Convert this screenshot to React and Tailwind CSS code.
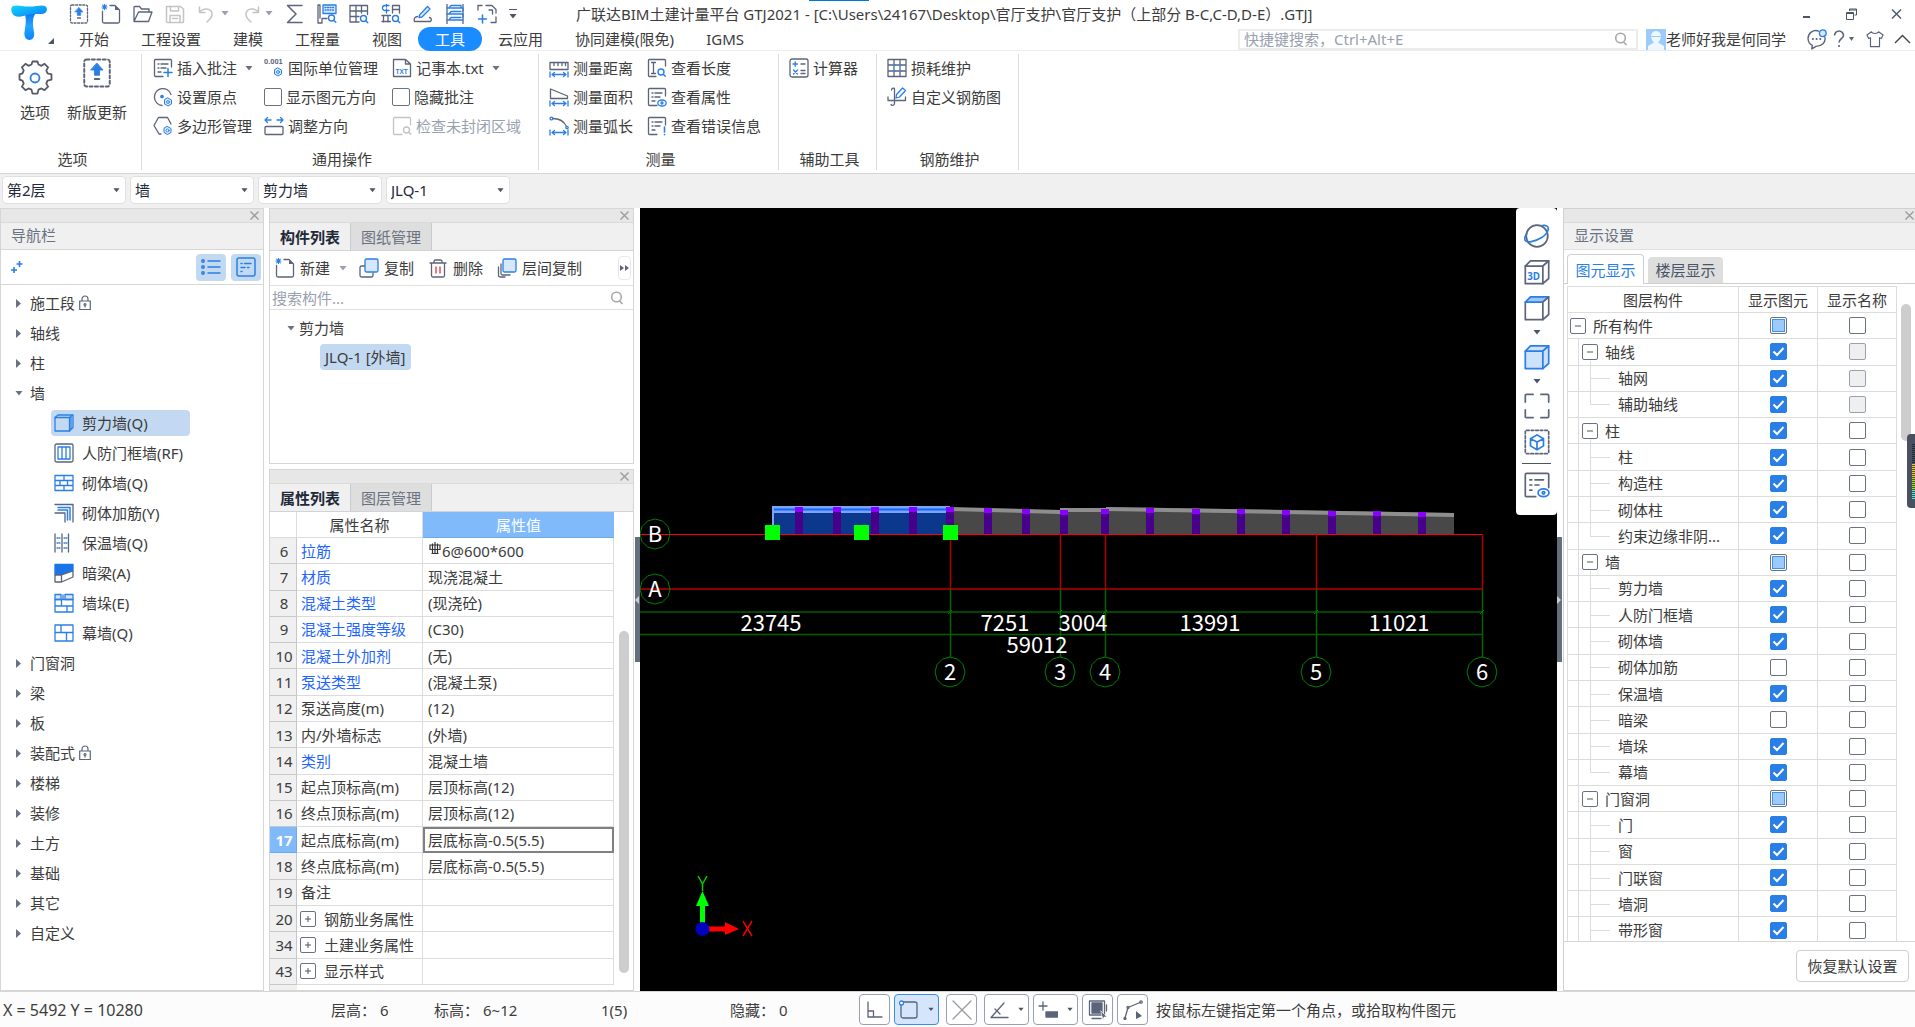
import clsx from "clsx"

const G = "#5b6478"
const B = "#2a7fe6"

const Icon = ({ size = 20, children, className }) => (
  <svg
    width={size}
    height={size}
    viewBox="0 0 20 20"
    fill="none"
    stroke={G}
    strokeWidth="1.3"
    strokeLinecap="round"
    strokeLinejoin="round"
    className={clsx("shrink-0", className)}
    aria-hidden="true"
  >
    {children}
  </svg>
)

const Caret = ({ className = "fill-gray-500" }) => (
  <svg width="8" height="5" viewBox="0 0 8 5" className={clsx("shrink-0", className)} aria-hidden="true">
    <path d="M0.5 0h7L4 4.5z" />
  </svg>
)

const SmallGear = ({ x, y }) => (
  <g stroke={B} strokeWidth="1">
    <path d={`M${x} ${y - 4}l3.5 2v4l-3.5 2l-3.5 -2v-4z`} fill="#d8e8fc" />
    <circle cx={x} cy={y} r="1.4" fill="#fff" />
  </g>
)

const Lens = ({ x, y, color = B }) => (
  <g stroke={color} strokeWidth="1.4">
    <circle cx={x} cy={y} r="3" />
    <path d={`M${x + 2.3} ${y + 2.3}l2 2`} />
  </g>
)

/* quick access bar */
const IconUpdate = ({ size }) => (
  <Icon size={size}>
    <rect x="1.5" y="1" width="17" height="18" rx="1.5" strokeDasharray="2 1.6" />
    <path d="M10 3.5l4 4.5h-2.3v3.5h-3.4V8H6z" fill={B} stroke={B} strokeWidth="0.6" />
    <path d="M8.5 14h3" stroke={G} />
  </Icon>
)
const IconNew = () => (
  <Icon>
    <path d="M1.5 7.5v10a1.5 1.5 0 001.5 1.5h14a1.5 1.5 0 001.5-1.5V6L14 1.5H9" />
    <path d="M14 1.5V6h4.5z" fill={G} stroke="none" />
    <path d="M3.5 0.5v5M1 3h5M1.7 1.2l3.6 3.6M5.3 1.2L1.7 4.8" stroke={B} strokeWidth="1.1" />
  </Icon>
)
const IconOpen = () => (
  <Icon>
    <path d="M1 17.5V3.5a1 1 0 011-1h4.5l2 2.5H16v3M1 17.5h14.5L19 8H5.5z" />
  </Icon>
)
const IconSave = () => (
  <Icon>
    <g stroke="#c4c4c4" strokeWidth="1.5">
      <path d="M1.5 2.5h14L18.5 5v12.5a1 1 0 01-1 1h-15a1 1 0 01-1-1z" />
      <path d="M5.5 2.5V7h8V2.5M5 18v-6.5h10V18M7.5 14.5h5" />
    </g>
  </Icon>
)
const IconUndo = ({ flip }) => (
  <Icon className={flip ? "-scale-x-100" : ""}>
    <path d="M2.5 3v5.5H8M2.5 8.5C6 3.5 14 4 15 9.5c.4 3-1.5 5.5-5 8.5" stroke="#c4c4c4" strokeWidth="1.5" />
  </Icon>
)
const IconSum = () => (
  <Icon>
    <path d="M17 1.5H2.5L11 10l-8.5 8.5H17" strokeWidth="1.5" />
  </Icon>
)
const IconSumView = () => (
  <Icon>
    <path d="M1 1v18h4v-4.5h5M1 1h2v13" />
    <path d="M6 1h13v8.5H6z" stroke={B} fill="#d8e8fc" />
    <path d="M8 3.5h9M8 6h9" stroke={B} strokeDasharray="1 1.5" />
    <Lens x={14.5} y={14} />
  </Icon>
)
const IconGridView = () => (
  <Icon>
    <path d="M1 1.5h17.5v9M1 1.5V18h9M1 7h17.5M1 12.5h9M7 1.5V18M12.5 1.5V9" />
    <Lens x={14.5} y={14.5} />
  </Icon>
)
const IconRebarView = () => (
  <Icon>
    <path d="M8 1.5H4a2.5 2.5 0 000 5h4M5.5 0v3M5.5 5v4" stroke={B} />
    <path d="M11.5 1.5h7V9M11.5 1.5V9M11.5 5.5h7M1 11.5h8.5M2.5 11.5V18M7 11.5V18M1 17.5h8.5" />
    <Lens x={14.5} y={14.5} />
  </Icon>
)
const IconPenArc = () => (
  <Icon>
    <path d="M6.5 11l8-8.5L17 5l-8 8-3 .5z" stroke={B} fill="#d8e8fc" />
    <path d="M1.5 17.5h16M4.5 12.500c-3 .5-4 2.5-3 5M17.5 17.5c1.5-1.5 1-3.500-1-4" />
  </Icon>
)
const IconFloors = () => (
  <Icon>
    <path d="M2 0.5v19M18 0.5v19" />
    <path d="M4 4l2-2.5h10V4M2 4h16v3M4 10l2-2.5h10M2 10h16v3M2 16h16M4 16l2-2.5h10" stroke={B} />
  </Icon>
)
const IconFrameAdd = () => (
  <Icon>
    <path d="M1 6V1.5h4M9 1.5h6L19 5.5V9M19 13v5.5h-5M12 6h3.5v4" />
    <path d="M5.5 11v8M1.5 15h8" stroke={B} strokeWidth="1.5" />
  </Icon>
)

/* ribbon icons */
const IconGear = () => (
  <svg width="36" height="36" viewBox="0 0 36 36" fill="none" strokeWidth="1.8" strokeLinejoin="round" aria-hidden="true">
    <path
      d="M14.5 4.5l1-3h5l1 3 3 1.3 3-2 3.6 3.6-1.8 3 1.2 2.9 4 1v5.400l-4 1-1.2 2.9 1.8 3-3.6 3.6-3-1.8-3 1.2-1 4h-5l-1-4-3-1.2-3 1.8-3.600-3.600 1.8-3-1.2-2.9-3-1v-5.400l3-1 1.2-2.9-1.8-3 3.6-3.6 3 2z"
      stroke="#555b66"
    />
    <circle cx="18" cy="18" r="4.5" stroke={B} />
  </svg>
)
const IconNote = ({ extra, dim }) => (
  <Icon>
    <path d="M18.5 9V2.5a1 1 0 00-1-1h-15a1 1 0 00-1 1v15a1 1 0 001 1H10" stroke={dim ? "#c4c4c4" : G} />
    {!dim && <path d="M5 6h1M8 6h7M5 10h1M8 10h5M5 14h3" />}
    {extra}
  </Icon>
)
const IconUnits = () => (
  <Icon>
    <text x="0" y="6" fontSize="7.5" fontWeight="700" fill={G} stroke="none" className="font-['Liberation_Sans']">0.001</text>
    <SmallGear x={14} y={14} />
  </Icon>
)
const IconTxt = () => (
  <Icon>
    <path d="M1.5 1.5h12l5 4.5v12.5h-17zM13.5 1.5V6h5" />
    <text x="3.5" y="15.5" fontSize="6.5" fontWeight="700" fill={B} stroke="none" className="font-['Liberation_Sans']">TXT</text>
  </Icon>
)
const IconOrigin = () => (
  <Icon>
    <path d="M18 7.5A8.5 8.5 0 109 18.5" />
    <circle cx="9" cy="9.5" r="1.2" fill={B} stroke={B} />
    <SmallGear x={15} y={15} />
  </Icon>
)
const IconPolygon = () => (
  <Icon>
    <path d="M8 18H6L1 9.5l4.5-8h9L18 8" />
    <SmallGear x={14.5} y={14.5} />
  </Icon>
)
const IconDirection = () => (
  <Icon>
    <path d="M2 10.5h16a1 1 0 011 1v6a1 1 0 01-1 1H2a1 1 0 01-1-1v-6a1 1 0 011-1z" />
    <path d="M7 4H1.5M3.5 1.5L1 4l2.5 2.5M13 4h5.5M16.5 1.5L19 4l-2.5 2.5" stroke={B} />
  </Icon>
)
const MeasureArrow = () => (
  <path d="M1 14v5M19 14v5M3 16.5h14M5.5 14.5l-2.5 2 2.5 2M14.5 14.5l2.5 2-2.5 2" stroke={B} />
)
const IconDistance = () => (
  <Icon>
    <path d="M1 4.5h18v7H1zM5 4.5v3M9 4.5v3M13 4.5v3M16.5 4.5v3" />
    <MeasureArrow />
  </Icon>
)
const IconArea = () => (
  <Icon>
    <path d="M1.5 2v9.5h17V9z" />
    <MeasureArrow />
  </Icon>
)
const IconArc = () => (
  <Icon>
    <path d="M3.5 2.5c7 0 12 3.500 14 8" />
    <circle cx="2.5" cy="2.5" r="1.4" stroke={B} />
    <circle cx="18" cy="11.5" r="1.2" stroke={B} />
    <MeasureArrow />
  </Icon>
)
const IconLength = () => (
  <Icon>
    <path d="M18.5 8V2.5a1 1 0 00-1-1h-15a1 1 0 00-1 1v15a1 1 0 001 1H9M4.5 4.5h4M4.5 15.5h4M6.5 4.5v11" />
    <Lens x={14} y={14} />
  </Icon>
)
const Eye = () => (
  <g stroke={B}>
    <ellipse cx="15" cy="16" rx="4.2" ry="3" fill="#fff" />
    <circle cx="15" cy="16" r="1" />
  </g>
)
const IconCalc = () => (
  <Icon>
    <rect x="1" y="1" width="18" height="18" rx="2" />
    <path d="M4 6h4.5M6.2 3.8v4.5M4.5 12l4 4M8.5 12l-4 4" stroke={B} />
    <path d="M12 6h4M12 12.5h4M12 15.5h4" />
  </Icon>
)
const IconLoss = () => (
  <Icon>
    <path d="M1 1.5h18v17H1zM1 7h18M1 13h18M7 1.5v17M13 1.5v17" />
    <g fill="#fff" stroke={B} strokeWidth="1">
      <circle cx="7" cy="7" r="0.8" />
      <circle cx="13" cy="7" r="0.8" />
      <circle cx="7" cy="13" r="0.8" />
      <circle cx="13" cy="13" r="0.8" />
    </g>
  </Icon>
)
const IconCustomBar = () => (
  <Icon>
    <path d="M7.5 1.5v15c0 2-3 2.500-3.500 1M1 13.5h17.5V10M7.5 1.5c-1.5-1-3 0-3 1.5M1 13.5V10" />
    <path d="M9.5 7.5l6-6.5 3 2.5-6 6.5-3.5 1z" stroke={B} fill="#fff" />
  </Icon>
)

/* navigator icons */
const IconCube = ({ fill = "#e8f1fd", top, stroke = B, size, label }) => (
  <Icon size={size}>
    <path d="M1 5.5h13.5V19H1z" fill={fill} stroke={stroke} />
    <path d="M1 5.5L5 1.5h14L14.5 5.5z" fill={top || fill} stroke={top ? B : stroke} />
    <path d="M19 1.5V15l-4.5 4V5.5z" fill={fill} stroke={stroke} />
    {label && <text x="2.5" y="16" fontSize="7.5" fontWeight="700" fill={B} stroke="none" className="font-['Open_Sans']">3D</text>}
  </Icon>
)
const IconWallShear = () => (
  <Icon>
    <path d="M1 4.5h14.5V18H1z" stroke={B} />
    <path d="M1 4.5L4 2h15v12.5L15.5 18M15.5 4.5L19 2M17 4v12.5" stroke={B} />
  </Icon>
)
const IconDoorFrame = () => (
  <Icon>
    <rect x="1" y="1" width="18" height="18" rx="1.5" />
    <path d="M4 4h12v12H4zM8 4v12M12 4v12" stroke={B} />
  </Icon>
)
const IconBrick = () => (
  <Icon>
    <path d="M1 2.5h18v15H1zM1 7.5h18M1 12.5h18M10 2.5v5M6 7.5v5M13.5 7.5v5M10 12.5v5" stroke={B} />
  </Icon>
)
const IconBrickBar = () => (
  <Icon>
    <path d="M1 1.5h18V19M1 10h10v9" />
    <path d="M4 4.5h12V17M4 7h9.5v10" stroke={B} strokeWidth="1.5" />
  </Icon>
)
const IconInsulate = () => (
  <Icon>
    <path d="M1 1v18M8 1v18M14.5 1v18" />
    <path d="M3 5h3M3 10h3M3 15h3M10 5h3M10 10h3M10 15h3" stroke={B} strokeDasharray="1 1.2" />
  </Icon>
)
const IconBeam = () => (
  <Icon>
    <path d="M1 1.5h18v6L8 12H1z" fill="#1a74e8" stroke="#1a74e8" />
    <path d="M1 12h6.5v7H1zM7.5 12L19 8v6L7.5 19" fill="#fff" />
  </Icon>
)
const IconPier = () => (
  <Icon>
    <path d="M1 1.5h6v5H1zM11 1.5h8v5h-8z" fill="#d8e8fc" stroke={B} />
    <path d="M1 6.5h18V19H1zM1 13h18M9 2v4.5M7.5 6.5V13M13 13v6" stroke={B} />
  </Icon>
)
const IconCurtain = () => (
  <Icon>
    <path d="M1 2h18v16H1zM1 9.5h18M7 2v7.5M12.5 9.5V18" stroke={B} />
  </Icon>
)
const IconLock = () => (
  <svg width="12" height="16" viewBox="0 0 12 16" fill="none" stroke={G} strokeWidth="1.2" aria-hidden="true">
    <path d="M0.7 6h10.600v8.500H0.700zM3 6V4a3 3 0 016 0v2" />
    <circle cx="6" cy="9.5" r="1" />
    <path d="M6 10.5v2" />
  </svg>
)
const IconSearch = () => (
  <svg width="14" height="14" viewBox="0 0 14 14" fill="none" stroke="#a8a8a8" strokeWidth="1.6" aria-hidden="true">
    <circle cx="6.5" cy="6" r="4.8" />
    <path d="M9.5 10l3 3" />
  </svg>
)
const IconCopy = ({ layered }) => (
  <Icon>
    <path d={layered ? "M4 6v9.5a1.5 1.5 0 001.5 1.5H13M1.500 9v8.500A1.500 1.500 0 003 19h5" : "M6 8H2.500A1.500 1.500 0 001 9.500v8A1.500 1.500 0 002.500 19h10a1.500 1.500 0 001.500-1.500V15"} />
    <rect x="6" y="1" width="13" height="13" rx="1.5" fill="#d8e8fc" stroke={B} />
  </Icon>
)
const IconTrash = () => (
  <Icon>
    <path d="M2 5h16M6 5V3.500A1.500 1.500 0 017.500 2h5A1.500 1.500 0 0114 3.500V5M3.500 5v12.500A1.500 1.500 0 005 19h10a1.500 1.500 0 001.500-1.500V5" />
    <path d="M8 9v6M12 9v6" stroke="#e0343b" />
  </Icon>
)

const MENU = ["开始", "工程设置", "建模", "工程量", "视图", "工具", "云应用", "协同建模(限免)", "IGMS"]

const Logo = () => (
  <svg width="38" height="38" viewBox="0 0 38 38" aria-hidden="true">
    <defs>
      <linearGradient id="logoTop" x1="0" y1="0" x2="1" y2="1">
        <stop offset="0" stopColor="#12d8fb" />
        <stop offset="1" stopColor="#0a78f5" />
      </linearGradient>
      <linearGradient id="logoStem" x1="0" y1="0" x2="0" y2="1">
        <stop offset="0" stopColor="#0d6ff2" />
        <stop offset="0.5" stopColor="#22a6fb" />
        <stop offset="1" stopColor="#0b84fa" />
      </linearGradient>
    </defs>
    <path d="M13 8c4 3 3 12 1.500 20-.8 5 2 8 5 8s5.500-3 4.500-8c-1.500-8-2-16 3-20z" fill="url(#logoStem)" />
    <path d="M3 2c5-1.500 8 .5 16 .5S31 .5 35 2c3 1.500 2.500 6.500-1 7.500-5 1.500-9-.5-15 1-6 1-9 3.500-14 1.500C1 10 0 3.500 3 2z" fill="url(#logoTop)" />
  </svg>
)

const QuickBar = () => (
  <div className="flex h-[26px] items-center gap-3">
    <button aria-label="更新"><IconUpdate /></button>
    <button aria-label="新建工程"><IconNew /></button>
    <button aria-label="打开"><IconOpen /></button>
    <button aria-label="保存"><IconSave /></button>
    <button aria-label="撤销" className="flex w-8 items-center justify-between"><IconUndo /><Caret className="fill-gray-400" /></button>
    <button aria-label="恢复" className="flex w-8 items-center justify-between"><IconUndo flip /><Caret className="fill-gray-400" /></button>
    <button aria-label="汇总计算"><IconSum /></button>
    <button aria-label="查看工程量"><IconSumView /></button>
    <button aria-label="查看报表"><IconGridView /></button>
    <button aria-label="查看钢筋"><IconRebarView /></button>
    <button aria-label="编辑钢筋"><IconPenArc /></button>
    <button aria-label="楼层"><IconFloors /></button>
    <button aria-label="框选"><IconFrameAdd /></button>
    <button aria-label="更多" className="flex flex-col items-center gap-1">
      <span className="h-px w-2 bg-gray-600" />
      <Caret className="fill-gray-600" />
    </button>
  </div>
)

const Header = () => (
  <header className="relative z-10 flex h-[51px] shrink-0 border-b border-[#ececec] bg-white">
    <div className="absolute left-[809px] top-0 h-px w-[60px] bg-[#0078d7]" />
    <div className="flex w-[63px] shrink-0 pl-[10px] pt-1">
      <Logo />
      <svg width="6" height="6" viewBox="0 0 6 6" className="mt-[34px] fill-gray-600" aria-hidden="true"><path d="M6 0v6H0z" /></svg>
    </div>
    <div className="flex min-w-0 flex-1 flex-col">
      <div className="flex h-[27px] shrink-0 items-center">
        <div className="w-[513px] shrink-0 pl-[6px]"><QuickBar /></div>
        <h1 className="flex-1 whitespace-nowrap">
          广联达BIM土建计量平台 GTJ2021 - [C:\Users\24167\Desktop\官厅支护\官厅支护（上部分 B-C,C-D,D-E）.GTJ]
        </h1>
        <div className="flex gap-[34px] pr-[13px] text-gray-600">
          <button aria-label="最小化"><svg width="10" height="12" viewBox="0 0 10 12" fill="currentColor"><path d="M1 8h7v2H1z" /></svg></button>
          <button aria-label="还原">
            <svg width="11" height="12" viewBox="0 0 11 12" fill="none" stroke="currentColor"><path d="M3.5 3V1h7v6h-2M3.5 2h7M0.5 4.5h7v7h-7zM0.5 5.5h7" /></svg>
          </button>
          <button aria-label="关闭"><svg width="11" height="12" viewBox="0 0 11 12" stroke="currentColor" strokeWidth="1.4"><path d="M1 1.5l9 9M10 1.5l-9 9" /></svg></button>
        </div>
      </div>
      <div className="flex h-6 shrink-0 items-center">
        <nav className="flex flex-1">
          {MENU.map((m) => (
            <button
              key={m}
              className={clsx("h-6 whitespace-nowrap rounded-full", m === "工具" ? "bg-[#1a8cff] px-[17px] text-white" : "px-4")}
            >
              {m}
            </button>
          ))}
        </nav>
        <label className="flex h-[21px] w-[400px] items-center border-2 border-[#ececec] px-1">
          <input className="min-w-0 flex-1 outline-none placeholder:text-gray-400" placeholder="快捷键搜索，Ctrl+Alt+E" aria-label="快捷键搜索" />
          <span className="mr-1"><IconSearch /></span>
        </label>
        <button className="ml-2 flex items-center">
          <svg width="20" height="21" viewBox="0 0 20 21" aria-hidden="true">
            <path d="M0 0h20v21H0z" fill="#9ccbfb" />
            <path d="M5 7a5 5 0 0110 0c0 3-1.500 5-3 6.500l6 3.500v4H2v-4l6-3.500C6.500 12 5 10 5 7z" fill="#eef6ff" />
            <path d="M4 7.5h12" stroke="#9ccbfb" />
          </svg>
          <span className="whitespace-nowrap">老师好我是何同学</span>
        </button>
        <button aria-label="消息" className="ml-5">
          <Icon size={21}>
            <path d="M12 2C7 0 1.500 4 2 9.500c.2 3 1.500 5 4 6L5.500 19l4-2.500C15 16.500 19 13 18 8" />
            <path d="M6.500 9.500h.2M10 9.500h.2M13.500 9.500h.2" strokeWidth="1.8" />
            <circle cx="16" cy="4" r="3.2" stroke={B} fill="#d8e8fc" />
          </Icon>
        </button>
        <button aria-label="帮助" className="ml-[6px] flex items-center gap-1">
          <svg width="12" height="18" viewBox="0 0 12 18" fill="none" stroke={G} strokeWidth="1.6"><path d="M1.500 5.500a4.500 4.500 0 119 0c0 3-4.500 3.500-4.500 7M6 15v2" /></svg>
          <svg width="5" height="4" viewBox="0 0 5 4" fill={G}><path d="M0 0h5L2.5 4z" /></svg>
        </button>
        <button aria-label="皮肤" className="ml-3">
          <Icon size={18}><path d="M6 2L1 5.500 3 9.500l2-1V18.500h10V8.500l2 1 2-4L14 2c-1 2.500-7 2.500-8 0z" /></Icon>
        </button>
        <button aria-label="收起" className="ml-[10px] mr-1">
          <svg width="17" height="10" viewBox="0 0 17 10" fill="none" stroke="#444" strokeWidth="1.4"><path d="M1 9l7.500-7.500L16 9" /></svg>
        </button>
      </div>
    </div>
  </header>
)

const Tool = ({ icon, text, caret, disabled }) => (
  <button disabled={disabled} className={clsx("flex h-7 items-center gap-1 whitespace-nowrap", disabled && "text-gray-400")}>
    {icon}
    <span>{text}</span>
    {caret && <span className="ml-1"><Caret /></span>}
  </button>
)

const ToolCheck = ({ text }) => (
  <label className="flex h-7 items-center gap-1 whitespace-nowrap">
    <input type="checkbox" className="size-[18px] appearance-none rounded-xs border border-gray-500 bg-white checked:bg-[#2a7fe6]" />
    {text}
  </label>
)

const Group = ({ title, className, children }) => (
  <section className={clsx("my-[3px] flex shrink-0 flex-col justify-between border-r border-[#dcdcdc]", className)}>
    {children}
    <h2 className="pb-px pl-1 text-center">{title}</h2>
  </section>
)

const Ribbon = () => (
  <div className="flex h-[123px] shrink-0 border-b border-[#d4d4d4] bg-white">
    <Group title="选项" className="w-[142px]">
      <div className="flex items-end gap-[14px] pl-[17px] pt-1">
        <button className="flex flex-col items-center gap-[6px]">
          <IconGear />
          选项
        </button>
        <button className="flex flex-col items-center gap-[14px]">
          <IconUpdate size={30} />
          新版更新
        </button>
      </div>
    </Group>
    <Group title="通用操作" className="w-[397px]">
      <div className="grid grid-cols-[111px_128px_auto] gap-y-px pl-[11px]">
        <Tool icon={<IconNote extra={<path d="M15 10.500v8M11 14.500h8" stroke={B} strokeWidth="1.5" />} />} text="插入批注" caret />
        <Tool icon={<IconUnits />} text="国际单位管理" />
        <Tool icon={<IconTxt />} text="记事本.txt" caret />
        <Tool icon={<IconOrigin />} text="设置原点" />
        <ToolCheck text="显示图元方向" />
        <ToolCheck text="隐藏批注" />
        <Tool icon={<IconPolygon />} text="多边形管理" />
        <Tool icon={<IconDirection />} text="调整方向" />
        <Tool icon={<IconNote dim extra={<Lens x={14.5} y={14} color="#c4c4c4" />} />} text="检查未封闭区域" disabled />
      </div>
    </Group>
    <Group title="测量" className="w-[240px]">
      <div className="grid grid-cols-[98px_auto] gap-y-px pl-[10px]">
        <Tool icon={<IconDistance />} text="测量距离" />
        <Tool icon={<IconLength />} text="查看长度" />
        <Tool icon={<IconArea />} text="测量面积" />
        <Tool icon={<IconNote extra={<Eye />} />} text="查看属性" />
        <Tool icon={<IconArc />} text="测量弧长" />
        <Tool icon={<IconNote extra={<path d="M17.500 11v5M17.500 18.500v.2" stroke={B} strokeWidth="1.6" />} />} text="查看错误信息" />
      </div>
    </Group>
    <Group title="辅助工具" className="w-[98px]">
      <div className="pl-[10px]"><Tool icon={<IconCalc />} text="计算器" /></div>
    </Group>
    <Group title="钢筋维护" className="w-[142px]">
      <div className="flex flex-col gap-px pl-[10px]">
        <Tool icon={<IconLoss />} text="损耗维护" />
        <Tool icon={<IconCustomBar />} text="自定义钢筋图" />
      </div>
    </Group>
  </div>
)

const Picker = ({ label, value }) => (
  <div className="relative flex w-[124px] items-center">
    <select
      aria-label={label}
      defaultValue={value}
      className="h-7 w-full appearance-none rounded border border-[#e0e0e0] bg-white pl-1 text-gray-800 outline-none"
    >
      <option>{value}</option>
    </select>
    <span className="pointer-events-none absolute right-[6px]"><Caret className="w-[7px] fill-gray-600" /></span>
  </div>
)

const DockStrip = ({ className = "pr-1" }) => (
  <div className={clsx("flex h-[14px] shrink-0 items-center justify-end border-b border-[#dadada] bg-[#e7e7e7]", className)}>
    <button aria-label="关闭面板">
      <svg width="9" height="9" viewBox="0 0 9 9" stroke="#9a9a9a" strokeWidth="1.3"><path d="M0.5 0.5l8 8M8.5 0.5l-8 8" /></svg>
    </button>
  </div>
)

const NAV = [
  { name: "施工段", lock: true },
  { name: "轴线" },
  { name: "柱" },
  {
    name: "墙",
    children: [
      { name: "剪力墙(Q)", icon: <IconWallShear />, active: true },
      { name: "人防门框墙(RF)", icon: <IconDoorFrame /> },
      { name: "砌体墙(Q)", icon: <IconBrick /> },
      { name: "砌体加筋(Y)", icon: <IconBrickBar /> },
      { name: "保温墙(Q)", icon: <IconInsulate /> },
      { name: "暗梁(A)", icon: <IconBeam /> },
      { name: "墙垛(E)", icon: <IconPier /> },
      { name: "幕墙(Q)", icon: <IconCurtain /> },
    ],
  },
  { name: "门窗洞" },
  { name: "梁" },
  { name: "板" },
  { name: "装配式", lock: true },
  { name: "楼梯" },
  { name: "装修" },
  { name: "土方" },
  { name: "基础" },
  { name: "其它" },
  { name: "自定义" },
]

const Navigator = () => (
  <aside className="flex w-[264px] shrink-0 flex-col border border-[#d6d6d6] bg-white">
    <DockStrip />
    <h2 className="h-[27px] shrink-0 border-b border-[#d6d6d6] bg-[#f0f0f0] pl-[10px] leading-6 text-gray-500">导航栏</h2>
    <div className="flex h-[35px] shrink-0 items-center gap-[5px] border-b border-[#d6d6d6] pl-[10px] pr-[2px]">
      <button aria-label="展开" className="mr-auto">
        <svg width="12" height="14" viewBox="0 0 12 14" stroke={B} strokeWidth="1.6"><path d="M8.5 1v6M5.5 4h6M3 7v6M0 10h6" /></svg>
      </button>
      <button aria-label="列表" className="flex h-[27px] w-[30px] items-center justify-center rounded bg-[#c3d9f2]">
        <Icon>
          <g stroke={B} strokeWidth="1.5"><path d="M7 4h12M7 10h12M7 16h12" /><circle cx="2" cy="4" r="1.2" /><circle cx="2" cy="10" r="1.2" /><circle cx="2" cy="16" r="1.2" /></g>
        </Icon>
      </button>
      <button aria-label="详情" className="flex h-[27px] w-[30px] items-center justify-center rounded bg-[#c3d9f2]">
        <Icon>
          <g stroke={B} strokeWidth="1.5"><rect x="1" y="1" width="18" height="18" rx="2" /><path d="M5 6.5h1M8.5 6.5H15M5 10.5h4M11.5 10.5H13M5 14.5h1" /></g>
        </Icon>
      </button>
    </div>
    <ul className="pt-[3px]">
      {NAV.map((n) => (
        <li key={n.name}>
          <button className="flex h-[30px] items-center pl-[14px]">
            <span className="w-[15px]">
              {n.children ? (
                <Caret className="fill-gray-500" />
              ) : (
                <svg width="6" height="9" viewBox="0 0 6 9" className="ml-px fill-gray-500" aria-hidden="true"><path d="M0 0l5 4.5L0 9z" /></svg>
              )}
            </span>
            {n.name}
            {n.lock && <span className="ml-1"><IconLock /></span>}
          </button>
          {n.children && (
            <ul className="pl-[50px]">
              {n.children.map((c) => (
                <li key={c.name} className="flex h-[30px] items-center">
                  <button className={clsx("flex h-[26px] w-[139px] items-center gap-2 whitespace-nowrap rounded pl-[3px]", c.active && "bg-[#c3d9f2]")}>
                    {c.icon}
                    {c.name}
                  </button>
                </li>
              ))}
            </ul>
          )}
        </li>
      ))}
    </ul>
  </aside>
)

const DockTabs = ({ tabs }) => (
  <div className="flex h-7 shrink-0 border-b border-[#d0d3d8] bg-[#f0f0f0]">
    {tabs.map((t, i) => (
      <button
        key={t}
        className={clsx("w-[81px] border-r border-[#c8ccd2]", i === 0 ? "bg-[#f0f0f0] font-bold text-gray-800" : "bg-[#dedede] text-gray-500")}
      >
        {t}
      </button>
    ))}
  </div>
)

const ComponentList = () => (
  <section className="flex h-[256px] shrink-0 flex-col border border-[#d6d6d6] bg-white">
    <DockStrip />
    <DockTabs tabs={["构件列表", "图纸管理"]} />
    <div className="flex h-[35px] shrink-0 items-center border-b border-[#e0e0e0] pl-[5px] pr-[2px]">
      <button className="flex items-center gap-[5px]"><IconNew />新建<span className="ml-1"><Caret className="fill-gray-400" /></span></button>
      <button className="ml-3 flex items-center gap-[5px]"><IconCopy />复制</button>
      <button className="ml-[14px] flex items-center gap-[5px]"><IconTrash />删除</button>
      <button className="ml-[14px] flex items-center gap-[5px]"><IconCopy layered />层间复制</button>
      <button aria-label="更多" className="ml-auto flex h-6 w-[13px] items-center justify-center rounded border border-[#e8e8e8]">
        <svg width="9" height="6" viewBox="0 0 9 6" fill={G}><path d="M0 0l4 3-4 3zM5 0l4 3-4 3z" /></svg>
      </button>
    </div>
    <label className="flex h-6 shrink-0 items-center border-b border-[#e0e0e0] pl-[2px] pr-[9px]">
      <input className="min-w-0 flex-1 outline-none placeholder:text-gray-400" placeholder="搜索构件..." aria-label="搜索构件" />
      <IconSearch />
    </label>
    <ul className="pt-[3px]">
      <li>
        <button className="flex h-[30px] items-center gap-1 pl-[17px]"><Caret />剪力墙</button>
        <ul className="pl-[50px] pt-px">
          <li><button className="h-[26px] rounded bg-[#c3d9f2] px-[5px]">JLQ-1 [外墙]</button></li>
        </ul>
      </li>
    </ul>
  </section>
)

const PROPS = [
  { id: 6, name: "拉筋", value: "6@600*600", link: true, bar: true },
  { id: 7, name: "材质", value: "现浇混凝土", link: true },
  { id: 8, name: "混凝土类型", value: "(现浇砼)", link: true },
  { id: 9, name: "混凝土强度等级", value: "(C30)", link: true },
  { id: 10, name: "混凝土外加剂", value: "(无)", link: true },
  { id: 11, name: "泵送类型", value: "(混凝土泵)", link: true },
  { id: 12, name: "泵送高度(m)", value: "(12)" },
  { id: 13, name: "内/外墙标志", value: "(外墙)" },
  { id: 14, name: "类别", value: "混凝土墙", link: true },
  { id: 15, name: "起点顶标高(m)", value: "层顶标高(12)" },
  { id: 16, name: "终点顶标高(m)", value: "层顶标高(12)" },
  { id: 17, name: "起点底标高(m)", value: "层底标高-0.5(5.5)", active: true },
  { id: 18, name: "终点底标高(m)", value: "层底标高-0.5(5.5)" },
  { id: 19, name: "备注", value: "" },
  { id: 20, name: "钢筋业务属性", value: "", group: true },
  { id: 34, name: "土建业务属性", value: "", group: true },
  { id: 43, name: "显示样式", value: "", group: true },
]

const Expander = ({ open }) => (
  <button aria-label={open ? "折叠" : "展开"} className="flex size-4 shrink-0 items-center justify-center rounded-xs border border-gray-500 bg-white">
    <svg width="8" height="8" viewBox="0 0 8 8" stroke="#555"><path d={open ? "M1 4h6" : "M1 4h6M4 1v6"} /></svg>
  </button>
)

const PropertyList = () => (
  <section className="mt-[5px] flex min-h-0 flex-1 flex-col border border-[#d6d6d6] bg-white">
    <DockStrip />
    <DockTabs tabs={["属性列表", "图层管理"]} />
    <div className="flex min-h-0 flex-1">
      <div className="flex w-[344px] flex-col">
        <div className="min-h-0 flex-1">
          <table className="h-full w-full table-fixed border-separate border-spacing-0">
            <colgroup>
              <col className="w-[27px]" />
              <col className="w-[126px]" />
              <col />
            </colgroup>
            <thead>
              <tr className="h-[26px]">
                <th className="border-b border-r border-[#dcdcdc]" />
                <th className="border-b border-r border-[#dcdcdc] p-0 font-normal">属性名称</th>
                <th className="border-b border-[#6aaaf2] bg-[#80bafb] p-0 font-normal text-white">属性值</th>
              </tr>
            </thead>
            <tbody>
              {PROPS.map((p) => (
                <tr key={p.id} className="h-[26px]">
                  <th
                    className={clsx(
                      "border-b border-r p-0 pl-[2px]",
                      p.active ? "border-[#6aaaf2] bg-[#80bafb] font-bold text-white" : "border-[#c8c8c8] bg-[#f0f0f0] font-normal",
                    )}
                  >
                    {p.id}
                  </th>
                  <td className="border-b border-r border-[#dcdcdc] p-0 pl-1">
                    <span className={clsx("flex items-center gap-2 whitespace-nowrap", p.link && "text-[#1f66ff]", p.group && "-ml-px")}>
                      {p.group && <Expander />}
                      {p.name}
                    </span>
                  </td>
                  <td className={clsx("whitespace-nowrap p-0", p.active ? "border-2 border-[#808080] pl-[3px]" : "border-b border-r border-[#dcdcdc] pl-[5px]")}>
                    <span className="flex items-center">
                      {p.bar && (
                        <svg width="14" height="14" viewBox="0 0 14 14" fill="none" stroke="#333" strokeWidth="1.2" className="mb-1" aria-hidden="true">
                          <path d="M7 0v12M2 3h10v4.500H2zM4.500 1.500v10M9.500 1.500v10M3.500 11.500h7" />
                        </svg>
                      )}
                      {p.value}
                    </span>
                  </td>
                </tr>
              ))}
            </tbody>
          </table>
        </div>
        <div className="h-[5px] w-[27px] shrink-0 bg-[#f0f0f0]" />
      </div>
      <div className="flex flex-1 flex-col items-center pb-[17px]">
        <div className="mt-auto h-[342px] w-[10px] rounded-full bg-[#cdcdcd]" />
      </div>
    </div>
  </section>
)

const AXES = [
  { id: "2", x: 950 },
  { id: "3", x: 1060 },
  { id: "4", x: 1105 },
  { id: "5", x: 1316 },
  { id: "6", x: 1482 },
]
const DIMS = [
  { text: "23745", x: 771, y: 631 },
  { text: "7251", x: 1005, y: 631 },
  { text: "3004", x: 1083, y: 631 },
  { text: "59012", x: 1037, y: 653 },
  { text: "13991", x: 1210, y: 631 },
  { text: "11021", x: 1399, y: 631 },
]
// x and top edge of each column in the wall
const POSTS = [
  [799, 507], [837, 507], [875, 507], [913, 507], [950, 507], [988, 508], [1026, 509], [1064, 510],
  [1105, 509], [1150, 508], [1196, 509], [1241, 509], [1286, 510], [1332, 511], [1377, 511], [1422, 512],
]

const Bubble = ({ x, y, label }) => {
  const pts = Array.from({ length: 12 }, (_, i) => {
    const a = (i * Math.PI) / 6
    return `${(x + 15 * Math.cos(a)).toFixed(1)},${(y + 15 * Math.sin(a)).toFixed(1)}`
  }).join(" ")
  return (
    <g>
      <polygon points={pts} fill="none" stroke="#008000" />
      <text x={x} y={y + 8} textAnchor="middle" fill="#fff">{label}</text>
    </g>
  )
}

const Drawing = () => (
  <svg viewBox="640 208 917 783" preserveAspectRatio="xMinYMin meet" className="h-full w-full font-['Noto_Sans_CJK_SC'] text-[22px]">
    {/* wall body */}
    <path d="M950 508L1060 511V508H1106V507L1454 513V534H950z" fill="#484848" />
    <path d="M950 507L1060 510V508H1106V507L1454 513V517L1106 511V512H1060V514L950 511z" fill="#8e8e8e" />
    <path d="M772 506H950V534H772z" fill="#0b378d" />
    <path d="M772 506H950V513H772z" fill="#7aa5f5" />
    <path d="M774 509.5H950" stroke="#1565ff" strokeWidth="2" />
    <path d="M773 506V534" stroke="#7aa5f5" strokeWidth="2" />
    {POSTS.map(([x, y]) => (
      <g key={x}>
        <path d={`M${x - 4} ${y}h8V534h-8z`} fill="#47008a" />
        <path d={`M${x - 4} ${y}h8v5h-8z`} fill="#8a00ff" />
      </g>
    ))}
    {/* axis grid */}
    <path d="M640 534.5H1483" stroke="#ff0000" />
    <path d="M640 589H1483" stroke="#8c0000" strokeWidth="2" />
    <path d="M640 612H1483M640 634.5H1483" stroke="#006000" strokeWidth="1.5" />
    {AXES.map((a) => (
      <g key={a.id}>
        <path d={`M${a.x}.5 534V589`} stroke="#b00000" strokeWidth="1.5" />
        <path d={`M${a.x}.5 589V657`} stroke="#006400" strokeWidth="1.5" />
        <path d={`M${a.x - 2} 614l4 -4`} stroke="#008000" />
        <Bubble x={a.x} y={672} label={a.id} />
      </g>
    ))}
    <Bubble x={655} y={534} label="B" />
    <Bubble x={655} y={589} label="A" />
    {DIMS.map((d) => (
      <text key={d.text} x={d.x} y={d.y} textAnchor="middle" fill="#fff">{d.text}</text>
    ))}
    <path d="M765 525h15v15h-15zM854 525h15v15h-15zM943 525h15v15h-15z" fill="#00ff00" />
    {/* coordinate gizmo */}
    <path d="M700 925V906H696L702.5 891L709 906H705V925z" fill="#00ff00" />
    <path d="M706 926.5H725V922L739 929L725 935V931.5H706z" fill="#ff0000" />
    <circle cx="702.5" cy="929" r="7" fill="#0000c0" />
    <path d="M698 876l4.5 8v7M707 876l-4.5 8" stroke="#00d000" strokeWidth="1.5" fill="none" />
    <path d="M743 921l9 15M752 921l-9 15" stroke="#f00000" strokeWidth="1.5" />
  </svg>
)

const ViewTools = () => (
  <div className="absolute right-0 top-0 flex h-[307px] w-[41px] flex-col items-center rounded-sm bg-white pt-[15px]">
    <button aria-label="动态观察">
      <Icon size={26}>
        <circle cx="10" cy="10" r="8.3" />
        <path d="M2 8.5C-1 13 1 15 5 14.5c6-1 12.5-5 13.5-9 .8-3-1.5-4-4.5-3.5" stroke={B} />
      </Icon>
    </button>
    <button aria-label="三维" className="mt-[10px]"><IconCube size={26} fill="#fff" stroke={G} label /></button>
    <button aria-label="俯视" className="mt-[10px] flex flex-col items-center gap-[9px]">
      <IconCube size={26} fill="#fff" top="#9cc6fa" stroke={G} />
      <Caret className="fill-gray-600" />
    </button>
    <button aria-label="实体" className="mt-[9px] flex flex-col items-center gap-[9px]">
      <IconCube size={26} fill="#cfe2fb" />
      <Caret className="fill-gray-600" />
    </button>
    <button aria-label="全屏" className="mt-[9px]">
      <Icon size={26}><path d="M1 7V2a1 1 0 011-1h5M13 1h5a1 1 0 011 1v5M19 13v5a1 1 0 01-1 1h-5M7 19H2a1 1 0 01-1-1v-5" /></Icon>
    </button>
    <button aria-label="选中构件" className="mt-[10px]">
      <Icon size={26}>
        <rect x="1" y="1" width="18" height="18" rx="1" strokeDasharray="2 1.5" />
        <path d="M10 4.5l5 3v5.5l-5 3-5-3V7.5zM5 7.5l5 2.5 5-2.5M10 10v6" stroke={B} />
      </Icon>
    </button>
    <div className="my-2 h-px w-[29px] bg-gray-600" />
    <button aria-label="显示设置">
      <Icon size={26}>
        <path d="M19 12V2a1 1 0 00-1-1H2a1 1 0 00-1 1v16a1 1 0 001 1h7M4.5 6h1.5M8.5 6H15M4.5 10h1.5M8.5 10h3M4.5 14h1.5" />
        <Eye />
      </Icon>
    </button>
  </div>
)

const Splitter = ({ flip }) => (
  <div className="flex w-[6px] shrink-0 items-center bg-white">
    <button aria-label="收起面板" className={clsx("flex h-[125px] w-[5px] items-center bg-[#646f7e]", !flip && "ml-auto")}>
      <svg width="4" height="8" viewBox="0 0 4 8" fill="#c9ced6" className={flip ? "-scale-x-100" : ""}><path d="M4 0v8L0 4z" /></svg>
    </button>
  </div>
)

// [name, level, show element, show name, last in its branch]
const LAYERS = [
  ["所有构件", 0, "mixed", "off"],
  ["轴线", 1, "on", "disabled"],
  ["轴网", 2, "on", "disabled"],
  ["辅助轴线", 2, "on", "disabled", true],
  ["柱", 1, "on", "off"],
  ["柱", 2, "on", "off"],
  ["构造柱", 2, "on", "off"],
  ["砌体柱", 2, "on", "off"],
  ["约束边缘非阴...", 2, "on", "off", true],
  ["墙", 1, "mixed", "off"],
  ["剪力墙", 2, "on", "off"],
  ["人防门框墙", 2, "on", "off"],
  ["砌体墙", 2, "on", "off"],
  ["砌体加筋", 2, "off", "off"],
  ["保温墙", 2, "on", "off"],
  ["暗梁", 2, "off", "off"],
  ["墙垛", 2, "on", "off"],
  ["幕墙", 2, "on", "off", true],
  ["门窗洞", 1, "mixed", "off"],
  ["门", 2, "on", "off"],
  ["窗", 2, "on", "off"],
  ["门联窗", 2, "on", "off"],
  ["墙洞", 2, "on", "off"],
  ["带形窗", 2, "on", "off"],
]

const Check = ({ state, label }) => (
  <label className="relative mx-auto flex size-[17px]">
    <input
      type="checkbox"
      aria-label={label}
      defaultChecked={state === "on"}
      disabled={state === "disabled"}
      className="peer size-full appearance-none rounded-xs border border-gray-500 bg-white checked:border-[#2a7fe6] checked:bg-[#2a7fe6] disabled:border-gray-400 disabled:bg-[#efefef]"
    />
    <svg viewBox="0 0 17 17" className="pointer-events-none absolute inset-0 hidden peer-checked:block" fill="none" stroke="#fff" strokeWidth="2" aria-hidden="true">
      <path d="M3.5 8.5l3.5 3.5 6.5-7" />
    </svg>
    {state === "mixed" && <span className="pointer-events-none absolute inset-[2px] border border-[#3b93f5] bg-[#9ccafd]" />}
  </label>
)

const LayerName = ({ name, level, last }) => (
  <div className="relative flex h-full items-center overflow-hidden whitespace-nowrap">
    {level > 0 && <span className="absolute inset-y-0 left-[10px] w-px bg-[#dcdcdc]" />}
    {level === 1 && <span className="absolute bottom-0 left-[22px] h-1 w-px bg-[#dcdcdc]" />}
    {level === 2 && (
      <>
        <span className={clsx("absolute left-[22px] top-0 w-px bg-[#dcdcdc]", last ? "h-1/2" : "h-full")} />
        <span className="absolute left-[22px] top-1/2 h-px w-5 bg-[#dcdcdc]" />
      </>
    )}
    <span className={clsx("flex items-center gap-[7px]", level === 0 && "pl-[2px]", level === 1 && "pl-[14px]", level === 2 && "pl-[50px]")}>
      {level < 2 && <Expander open />}
      {name}
    </span>
  </div>
)

const DisplaySettings = () => (
  <aside className="relative flex w-[352px] shrink-0 flex-col border border-r-0 border-[#d0d0d0] bg-white">
    <DockStrip className="pr-px" />
    <h2 className="h-[27px] shrink-0 border-b border-[#e0e0e0] bg-[#f0f0f0] pl-[10px] leading-6 text-gray-500">显示设置</h2>
    <div className="flex h-[34px] shrink-0 items-end gap-1 border-b border-[#cfcfcf] pl-[3px]">
      <button className="-mb-px h-[30px] w-[77px] rounded-t border border-b-0 border-[#cfcfcf] bg-white text-[#2a7fe6]">图元显示</button>
      <button className="h-[26px] w-[75px] rounded-t bg-[#dedede] text-gray-600">楼层显示</button>
    </div>
    <div className="mt-[2px] flex min-h-0 flex-1 overflow-hidden border-b border-[#d6d6d6]">
      <table className="ml-[3px] h-[calc(100%+3px)] w-[330px] table-fixed border-separate border-spacing-0 border-l border-t border-[#dcdcdc]">
        <colgroup>
          <col />
          <col className="w-[79px]" />
          <col className="w-[79px]" />
        </colgroup>
        <thead>
          <tr className="h-[26px]">
            {["图层构件", "显示图元", "显示名称"].map((h) => (
              <th key={h} className="border-b border-r border-[#dcdcdc] p-0 font-normal">{h}</th>
            ))}
          </tr>
        </thead>
        <tbody>
          {LAYERS.map(([name, level, show, title, last], i) => (
            <tr key={i}>
              <td className="h-[26px] border-b border-r border-[#dcdcdc] p-0"><LayerName name={name} level={level} last={last} /></td>
              <td className="border-b border-r border-[#dcdcdc] p-0"><Check state={show} label={`${name} 显示图元`} /></td>
              <td className="border-b border-r border-[#dcdcdc] p-0"><Check state={title} label={`${name} 显示名称`} /></td>
            </tr>
          ))}
        </tbody>
      </table>
      <div className="flex flex-1 justify-center pt-[18px]">
        <div className="h-[137px] w-[10px] rounded-full bg-[#cdcdcd]" />
      </div>
    </div>
    <div className="flex h-[48px] shrink-0 items-center justify-end pr-[6px]">
      <button className="h-8 w-[113px] rounded border border-[#cfcfcf] bg-white">恢复默认设置</button>
    </div>
    <div className="absolute right-0 top-[225px] flex h-[74px] w-2 flex-col items-end justify-center gap-px rounded-l bg-[#4a5060]">
      {Array.from({ length: 28 }, (_, i) => (
        <span key={i} className={clsx("h-px w-[3px]", i < 10 ? "bg-gray-800" : i < 17 ? "bg-yellow-400" : i < 23 ? "bg-lime-400" : "bg-teal-300")} />
      ))}
    </div>
  </aside>
)

const StatusButton = ({ label, wide, active, children }) => (
  <button
    aria-label={label}
    className={clsx(
      "flex h-[31px] items-center justify-around rounded border",
      wide ? "w-[45px]" : "w-[31px]",
      active ? "border-[#3b8cf0] bg-[#d5e6fc]" : "border-gray-400 bg-white",
    )}
  >
    {children}
    {wide && <Caret className="w-[6px] fill-gray-600" />}
  </button>
)

const StatusBar = () => (
  <footer className="flex h-9 shrink-0 items-center whitespace-nowrap border-t border-[#d6d6d6] bg-[#fcfcfc] pl-[3px]">
    <span className="w-[328px] text-base">X = 5492 Y = 10280</span>
    <span className="flex w-[103px] gap-1"><span>层高：</span>6</span>
    <span className="flex w-[167px] gap-1"><span>标高：</span>6~12</span>
    <span className="w-[129px]">1(5)</span>
    <span className="flex w-[129px] gap-1"><span>隐藏：</span>0</span>
    <div className="flex items-center gap-1">
      <StatusButton label="正交"><Icon><path d="M3 2v15h14M3 11h5.5v6" /></Icon></StatusButton>
      <StatusButton label="框选" wide active>
        <Icon>
          <rect x="2" y="2" width="16" height="16" rx="2" />
          <circle cx="2.5" cy="3" r="2" fill="#fff" stroke={B} />
        </Icon>
      </StatusButton>
      <span className="mx-[3px] flex"><StatusButton label="交点"><Icon><path d="M1 1l18 18M19 1L1 19" stroke="#999" /></Icon></StatusButton></span>
      <StatusButton label="角度" wide><Icon><path d="M15 3L2 17.5h17M6 9l5 5" /></Icon></StatusButton>
      <StatusButton label="偏移" wide>
        <Icon><path d="M5 2v8M1 6h8" /><path d="M8 12h12v5H8z" fill={G} /></Icon>
      </StatusButton>
      <StatusButton label="跨图层选择">
        <Icon><path d="M4 3h10v10H4z" fill={G} /><path d="M1.5 1h15v14h-15zM4 18.5h9M18.5 5v6" /><path d="M13 11l6 6h-3l-1 3z" fill={G} stroke="#fff" strokeWidth="0.6" /></Icon>
      </StatusButton>
      <StatusButton label="折线选择">
        <Icon><path d="M2 18L5 7.5 17 2.5" /><circle cx="5" cy="7.5" r="1" fill="#fff" /><circle cx="18" cy="2" r="1.2" /><circle cx="2" cy="18.5" r="1" /><path d="M13 11v8l6-3z" fill={G} stroke="none" /></Icon>
      </StatusButton>
    </div>
    <span className="pl-2">按鼠标左键指定第一个角点，或拾取构件图元</span>
  </footer>
)

export default function App() {
  return (
    <div className="flex h-screen min-h-[1000px] flex-col overflow-hidden bg-white font-['Noto_Sans','Noto_Sans_CJK_SC',sans-serif] text-[15px] leading-5 text-[#3c3c3c]">
      <Header />
      <Ribbon />
      <div className="flex h-[34px] shrink-0 items-start gap-1 bg-[#f0f0f0] pl-[2px] pt-[2px]">
        <Picker label="楼层" value="第2层" />
        <Picker label="构件类型" value="墙" />
        <Picker label="构件" value="剪力墙" />
        <Picker label="构件名称" value="JLQ-1" />
      </div>
      <main className="flex min-h-0 flex-1">
        <Navigator />
        <div className="ml-[5px] flex w-[365px] shrink-0 flex-col">
          <ComponentList />
          <PropertyList />
        </div>
        <Splitter />
        <div className="relative min-w-0 flex-1 overflow-hidden bg-black">
          <Drawing />
          <ViewTools />
        </div>
        <Splitter flip />
        <DisplaySettings />
      </main>
      <StatusBar />
    </div>
  )
}
